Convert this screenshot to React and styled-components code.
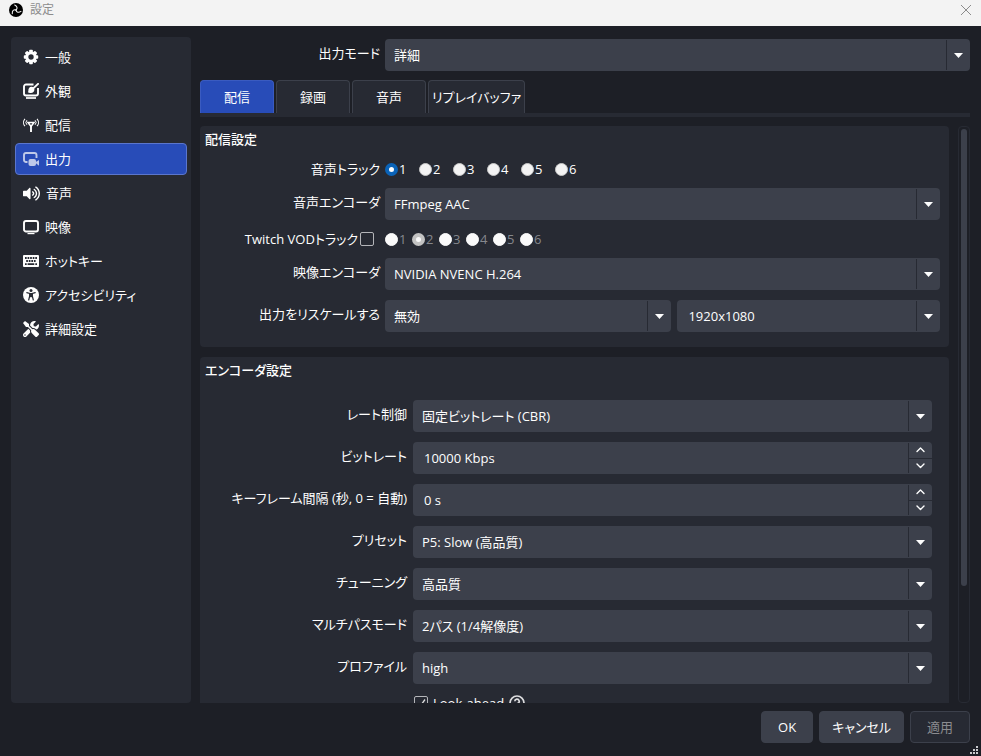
import React, { useState } from 'react'
import styled, { createGlobalStyle, css } from 'styled-components'
import { FaVolumeUp, FaTools } from 'react-icons/fa'

const GlobalStyle = createGlobalStyle`
  * {
    box-sizing: border-box;
  }
  body {
    margin: 0;
    background: #1d1f26;
  }
  body, button, input, select {
    font-family: 'Open Sans', 'Noto Sans CJK JP', sans-serif;
    font-size: 13px;
    line-height: 18px;
    font-feature-settings: 'palt';
    color: #fefefe;
  }
`

const Window = styled.div`
  position: relative;
  display: flex;
  flex-direction: column;
  height: 100vh;
  overflow: hidden;
  background: #1d1f26;
`

const TitleBar = styled.header`
  display: flex;
  align-items: center;
  gap: 7px;
  flex: none;
  height: 26px;
  padding: 0 9px 6px;
  background: #f3f3f3;
  color: #000;
`

const TitleText = styled.h1`
  flex: 1;
  margin: 0;
  font-size: 12px;
  font-weight: 400;
  color: #8c8c8c;
`

const CloseButton = styled.button`
  display: flex;
  padding: 0;
  border: 0;
  background: none;
  color: #8c8c8c;
`

const Body = styled.div`
  display: flex;
  gap: 9px;
  flex: 1;
  min-height: 0;
  padding: 11px 11px 8px;
`

const Sidebar = styled.nav`
  display: flex;
  flex-direction: column;
  gap: 2px;
  flex: none;
  width: 180px;
  padding: 4px;
  border-radius: 4px;
  background: #272a33;
`

const NavItem = styled.button`
  display: flex;
  align-items: center;
  gap: 6px;
  height: 32px;
  padding: 0 7px;
  border: 1px solid ${({ $active }) => ($active ? '#5b76cc' : 'transparent')};
  border-radius: 4px;
  background: ${({ $active }) => ($active ? '#284cb8' : 'none')};
  text-align: left;

  svg {
    flex: none;
    opacity: ${({ $active }) => ($active ? 0.7 : 1)};
  }
`

const Main = styled.main`
  display: flex;
  flex-direction: column;
  flex: 1;
  min-width: 0;
`

const Row = styled.div`
  display: grid;
  grid-template-columns: ${({ $wide }) => ($wide ? '207px' : '180px')} minmax(0, 1fr);
  column-gap: ${({ $wide }) => ($wide ? '6px' : '5px')};
  align-items: center;
`

const Label = styled.label`
  padding-bottom: 5px;
  text-align: right;
  white-space: nowrap;
`

const ModeRow = styled(Row)`
  flex: none;
  padding-top: 2px;
`

const fieldBox = css`
  min-width: 0;
  height: 32px;
  border-radius: 4px;
  background: #3c404b;
  overflow: hidden;
`

const SelectBox = styled.div`
  ${fieldBox}
  display: grid;
  grid-template-columns: minmax(0, 1fr);

  & > * {
    grid-area: 1 / 1;
  }
`

const NativeSelect = styled.select`
  width: 100%;
  height: 32px;
  padding: 0 30px 0 ${({ $inset }) => ($inset ? '11px' : '9px')};
  border: 0;
  appearance: none;
  background: none;
`

const SelectArrow = styled.span`
  display: flex;
  align-items: center;
  justify-content: center;
  justify-self: end;
  width: 24px;
  height: 30px;
  margin: 1px 0;
  border-left: 1px solid #272a33;
  pointer-events: none;
`

const SpinBox = styled.div`
  ${fieldBox}
  display: flex;
`

const SpinInput = styled.input`
  flex: 1;
  min-width: 0;
  padding: 0 11px;
  border: 0;
  background: none;
`

const SpinButtons = styled.div`
  display: flex;
  flex-direction: column;
  width: 24px;
  margin: 1px 0;
  border-left: 1px solid #272a33;
`

const SpinButton = styled.button`
  display: flex;
  align-items: center;
  justify-content: center;
  flex: 1;
  padding: 0;
  border: 0;
  background: none;

  & + & {
    border-top: 1px solid #272a33;
  }
`

const TabBar = styled.div`
  display: flex;
  gap: 2px;
  flex: none;
  margin: 9px 0;
  border-bottom: 4px solid #272a33;
`

const Tab = styled.button`
  min-width: 74px;
  height: 33px;
  padding: 0 3px;
  border: 1px solid ${({ $active }) => ($active ? '#3a5bc0' : '#3c404b')};
  border-bottom: 0;
  border-radius: 4px 4px 0 0;
  background: ${({ $active }) => ($active ? '#284cb8' : '#272a33')};
`

const ScrollArea = styled.div`
  display: flex;
  gap: 9px;
  flex: 1;
  min-height: 0;
`

const ScrollContent = styled.div`
  display: flex;
  flex-direction: column;
  gap: 10px;
  flex: 1;
  min-width: 0;
  overflow-y: auto;
  scrollbar-width: none;
`

const ScrollTrack = styled.div`
  flex: none;
  width: 12px;
  padding: 2px;
  border: 1px solid #272a33;
  border-radius: 4px;
`

const ScrollThumb = styled.div`
  width: 6px;
  height: 80%;
  border-radius: 3px;
  background: #3c404b;
`

const Group = styled.section`
  display: flex;
  flex-direction: column;
  gap: 10px;
  flex: none;
  padding: 4px ${({ $wide }) => ($wide ? '17px' : '9px')} 15px 0;
  border-radius: 4px;
  background: #272a33;
`

const GroupTitle = styled.h2`
  margin: 0 0 ${({ $wide }) => ($wide ? '11px' : '2px')};
  padding-left: 5px;
  font-size: 13px;
  font-weight: 500;
`

const RadioList = styled.div`
  display: grid;
  grid-auto-flow: column;
  grid-auto-columns: ${({ $tight }) => ($tight ? '27px' : '34px')};
`

const RadioLabel = styled.label`
  display: flex;
  align-items: center;
  gap: 1px;
  color: ${({ $disabled }) => ($disabled ? '#85878c' : '#fefefe')};
`

const Radio = styled.input`
  flex: none;
  width: 13px;
  height: 13px;
  margin: 0;
  border: 1px solid #c8c8c8;
  border-radius: 50%;
  appearance: none;
  background: #f3f3f3;

  &:checked {
    border: 4px solid #0a63b8;
    background: #fff;
  }
  &:disabled {
    border-color: #fafafa;
    background: #fafafa;
  }
  &:checked:disabled {
    border-color: #c3c3c3;
  }
`

const TrackLabel = styled.div`
  display: flex;
  align-items: center;
  justify-content: flex-end;
  gap: 2px;
  padding-right: 6px;
  white-space: nowrap;
`

const RadioCaption = styled.span`
  text-align: right;
`

const CheckBox = styled.input`
  flex: none;
  width: 14px;
  height: 14px;
  margin: 0;
  border: 1px solid #b4b5b9;
  border-radius: 2px;
  appearance: none;

  &:checked {
    background: center / 12px 12px no-repeat
      url("data:image/svg+xml,%3Csvg xmlns='http://www.w3.org/2000/svg' viewBox='0 0 12 12'%3E%3Cpath d='M2 6.5l3 3 5-7' fill='none' stroke='%23ddd' stroke-width='1.3'/%3E%3C/svg%3E");
  }
`

const Rescale = styled.div`
  display: grid;
  grid-template-columns: 12fr 11fr;
  gap: 6px;
`

const CheckRow = styled.div`
  display: flex;
  align-items: center;
  gap: 5px;
  grid-column: 2;
  padding-left: 1px;
`

const Footer = styled.footer`
  display: flex;
  justify-content: flex-end;
  gap: 6px;
  flex: none;
  padding: 0 11px 13px;
`

const Button = styled.button`
  min-width: 52px;
  height: 32px;
  padding: 0 12px;
  border: 1px solid #3c404b;
  border-radius: 4px;
  background: #3c404b;

  &:disabled {
    min-width: 60px;
    background: #272a33;
    color: #8b8c90;
  }
`

const Grip = styled.svg`
  position: absolute;
  right: 3px;
  bottom: 2px;
`

const Logo = () => (
  <svg width="14" height="14" viewBox="0 0 28 28" fill="none">
    <circle cx="14" cy="14" r="14" fill="#000" />
    {[0, 120, 240].map((a) => (
      <path
        key={a}
        d="M14.500 13.500C17 11 17 6.500 11.500 4"
        stroke="#f3f3f3"
        strokeWidth="2.200"
        strokeLinecap="round"
        transform={`rotate(${a} 14 14)`}
      />
    ))}
    <circle cx="14" cy="14" r="1.500" fill="#f3f3f3" />
  </svg>
)

const Icon = ({ children }) => (
  <svg width="16" height="16" viewBox="0 0 16 16" fill="none" stroke="currentColor">
    {children}
  </svg>
)

const GearIcon = () => (
  <Icon>
    <circle cx="8" cy="8" r="4.200" strokeWidth="3" />
    {[0, 45, 90, 135, 180, 225, 270, 315].map((a) => (
      <rect
        key={a}
        x="6.200"
        y="0.800"
        width="3.600"
        height="3"
        rx="0.800"
        fill="currentColor"
        stroke="none"
        transform={`rotate(${a} 8 8)`}
      />
    ))}
  </Icon>
)

const AppearanceIcon = () => (
  <Icon>
    <path d="M10.500 1.500H3a2 2 0 0 0-2 2v7a2 2 0 0 0 2 2h10a2 2 0 0 0 2-2V5" strokeWidth="1.900" />
    <path d="M3 15h10" strokeWidth="1.700" />
    <path d="M15.700 0.300L10 5.600" strokeWidth="1.900" />
    <path
      d="M8.200 3.700c1.600-.300 3.200.900 3.200 2.800 0 2.100-1.500 3.600-3.500 3.600-1.400 0-2.500-.400-3.200-1 .9-.3.6-1.400.7-2.400.2-1.600 1.200-2.700 2.800-3z"
      fill="currentColor"
      stroke="none"
    />
  </Icon>
)

const StreamIcon = () => (
  <Icon>
    <path d="M5 5.500h6L8 9.500z" strokeWidth="1.500" />
    <path d="M8 8.500V15" strokeWidth="1.900" />
    <path d="M3.900 3.200a3.400 3.400 0 0 0 0 4.600M12.100 3.200a3.400 3.400 0 0 1 0 4.600" strokeWidth="1" />
    <path d="M2 1.800a5.400 5.400 0 0 0 0 7.400M14 1.800a5.400 5.400 0 0 1 0 7.400" strokeWidth="1.100" />
  </Icon>
)

const OutputIcon = () => (
  <Icon>
    <path d="M4.500 11H3a2 2 0 0 1-2-2V4a2 2 0 0 1 2-2h8.500a2 2 0 0 1 2 2v3" strokeWidth="1.900" />
    <rect x="5.500" y="8" width="7.500" height="7" rx="2" fill="currentColor" stroke="none" />
    <path d="M12 11.500l4-2.600v5.800z" fill="currentColor" stroke="none" />
  </Icon>
)

const SpeakerIcon = () => <FaVolumeUp size={17} />

const MonitorIcon = () => (
  <Icon>
    <rect x="1" y="2" width="14" height="10.500" rx="2" strokeWidth="1.900" />
    <path d="M4.500 14.600h7" strokeWidth="1.200" />
  </Icon>
)

const KeyboardIcon = () => (
  <Icon>
    <rect x="0" y="2" width="16" height="12" rx="1" fill="currentColor" stroke="none" />
    <g stroke="#272a33">
      <path d="M2 5h12" strokeWidth="1.800" strokeDasharray="1.700 0.870" />
      <path d="M3.200 8h10.300" strokeWidth="1.800" strokeDasharray="1.700 0.870" />
      <path d="M2 11.200h1.700M4.600 11.200h6.700M12.300 11.200H14" strokeWidth="1.800" />
    </g>
  </Icon>
)

const AccessibilityIcon = () => (
  <Icon>
    <circle cx="8" cy="8" r="8" fill="currentColor" stroke="none" />
    <circle cx="8" cy="3.600" r="1.500" fill="#272a33" stroke="none" />
    <path
      d="M3.800 5.700L6.700 6.500V9L5.700 13M12.200 5.700L9.300 6.500V9l1 4"
      stroke="#272a33"
      strokeWidth="1.200"
      strokeLinecap="round"
    />
    <path d="M6.300 6h3.400v4.200H6.300z" fill="#272a33" stroke="none" />
  </Icon>
)

const HelpIcon = () => (
  <svg width="16" height="16" viewBox="0 0 16 16" fill="none" stroke="#dcdcde" strokeWidth="1.700">
    <circle cx="8" cy="8" r="7" />
    <path d="M5.800 6.300a2.200 2.200 0 1 1 3.200 2c-.700.400-1 .700-1 1.400M8 11v1.400" />
  </svg>
)

const Chevron = ({ up }) => (
  <svg width="9" height="6" viewBox="0 0 9 6" fill="none" stroke="#fefefe" strokeWidth="1.400">
    <path
      d={up ? 'M1 4.500l3.500-3.500 3.500 3.500' : 'M1 1l3.500 3.500L8 1'}
      strokeLinecap="round"
      strokeLinejoin="round"
    />
  </svg>
)

const Select = ({ id, value, inset, label }) => (
  <SelectBox>
    <NativeSelect id={id} $inset={inset} aria-label={label} defaultValue={value}>
      <option>{value}</option>
    </NativeSelect>
    <SelectArrow>
      <svg width="9" height="5" viewBox="0 0 9 5" fill="#fefefe">
        <path d="M0 0h9L4.500 5z" />
      </svg>
    </SelectArrow>
  </SelectBox>
)

const Spin = ({ id, value }) => (
  <SpinBox>
    <SpinInput id={id} defaultValue={value} />
    <SpinButtons>
      <SpinButton type="button" aria-label="+">
        <Chevron up />
      </SpinButton>
      <SpinButton type="button" aria-label="-">
        <Chevron />
      </SpinButton>
    </SpinButtons>
  </SpinBox>
)

const Radios = ({ name, selected, disabled }) => (
  <RadioList $tight={disabled}>
    {[1, 2, 3, 4, 5, 6].map((n) => (
      <RadioLabel key={n} $disabled={disabled}>
        <Radio type="radio" name={name} defaultChecked={n === selected} disabled={disabled} />
        {n}
      </RadioLabel>
    ))}
  </RadioList>
)

const pages = [
  { name: '一般', icon: GearIcon },
  { name: '外観', icon: AppearanceIcon },
  { name: '配信', icon: StreamIcon },
  { name: '出力', icon: OutputIcon },
  { name: '音声', icon: SpeakerIcon },
  { name: '映像', icon: MonitorIcon },
  { name: 'ホットキー', icon: KeyboardIcon },
  { name: 'アクセシビリティ', icon: AccessibilityIcon },
  { name: '詳細設定', icon: FaTools },
]

const tabs = ['配信', '録画', '音声', 'リプレイバッファ']

const encoderFields = [
  { id: 'rate', label: 'レート制御', value: '固定ビットレート (CBR)' },
  { id: 'bitrate', label: 'ビットレート', value: '10000 Kbps', spin: true },
  { id: 'keyframe', label: 'キーフレーム間隔 (秒, 0 = 自動)', value: '0 s', spin: true },
  { id: 'preset', label: 'プリセット', value: 'P5: Slow (高品質)' },
  { id: 'tuning', label: 'チューニング', value: '高品質' },
  { id: 'multipass', label: 'マルチパスモード', value: '2パス (1/4解像度)' },
  { id: 'profile', label: 'プロファイル', value: 'high' },
]

const App = () => {
  const [page, setPage] = useState('出力')
  const [tab, setTab] = useState('配信')

  return (
    <>
      <GlobalStyle />
      <Window>
        <TitleBar>
          <Logo />
          <TitleText>設定</TitleText>
          <CloseButton type="button" aria-label="閉じる">
            <svg width="12" height="12" viewBox="0 0 12 12" stroke="currentColor">
              <path d="M1 1l10 10M11 1L1 11" />
            </svg>
          </CloseButton>
        </TitleBar>

        <Body>
          <Sidebar>
            {pages.map(({ name, icon: PageIcon }) => (
              <NavItem key={name} type="button" $active={name === page} onClick={() => setPage(name)}>
                <PageIcon size={16} />
                {name}
              </NavItem>
            ))}
          </Sidebar>

          <Main>
            <ModeRow>
              <Label htmlFor="mode">出力モード</Label>
              <Select id="mode" value="詳細" />
            </ModeRow>

            <TabBar role="tablist">
              {tabs.map((name) => (
                <Tab
                  key={name}
                  type="button"
                  role="tab"
                  aria-selected={name === tab}
                  $active={name === tab}
                  onClick={() => setTab(name)}
                >
                  {name}
                </Tab>
              ))}
            </TabBar>

            <ScrollArea>
              <ScrollContent>
                <Group>
                  <GroupTitle>配信設定</GroupTitle>
                  <Row role="radiogroup" aria-labelledby="track-caption">
                    <RadioCaption id="track-caption">音声トラック</RadioCaption>
                    <Radios name="track" selected={1} />
                  </Row>
                  <Row>
                    <Label htmlFor="audio-encoder">音声エンコーダ</Label>
                    <Select id="audio-encoder" value="FFmpeg AAC" />
                  </Row>
                  <Row>
                    <TrackLabel>
                      <label htmlFor="vod">Twitch VODトラック</label>
                      <CheckBox id="vod" type="checkbox" />
                    </TrackLabel>
                    <Radios name="vod-track" selected={2} disabled />
                  </Row>
                  <Row>
                    <Label htmlFor="video-encoder">映像エンコーダ</Label>
                    <Select id="video-encoder" value="NVIDIA NVENC H.264" />
                  </Row>
                  <Row>
                    <Label htmlFor="rescale">出力をリスケールする</Label>
                    <Rescale>
                      <Select id="rescale" value="無効" />
                      <Select id="resolution" value="1920x1080" label="解像度" inset />
                    </Rescale>
                  </Row>
                </Group>

                <Group $wide>
                  <GroupTitle $wide>エンコーダ設定</GroupTitle>
                  {encoderFields.map(({ id, label, value, spin }) => (
                    <Row key={id} $wide>
                      <Label htmlFor={id}>{label}</Label>
                      {spin ? <Spin id={id} value={value} /> : <Select id={id} value={value} />}
                    </Row>
                  ))}
                  <Row $wide>
                    <CheckRow>
                      <CheckBox id="look-ahead" type="checkbox" defaultChecked />
                      <label htmlFor="look-ahead">Look-ahead</label>
                      <HelpIcon />
                    </CheckRow>
                  </Row>
                </Group>
              </ScrollContent>
              <ScrollTrack>
                <ScrollThumb />
              </ScrollTrack>
            </ScrollArea>
          </Main>
        </Body>

        <Footer>
          <Button type="button">OK</Button>
          <Button type="button">キャンセル</Button>
          <Button type="button" disabled>
            適用
          </Button>
        </Footer>

        <Grip width="8" height="8" viewBox="0 0 8 8" fill="#c9cacd">
          <path d="M6 0h2v2H6zM6 3h2v2H6zM6 6h2v2H6zM3 3h2v2H3zM3 6h2v2H3zM0 6h2v2H0z" />
        </Grip>
      </Window>
    </>
  )
}

export default App
